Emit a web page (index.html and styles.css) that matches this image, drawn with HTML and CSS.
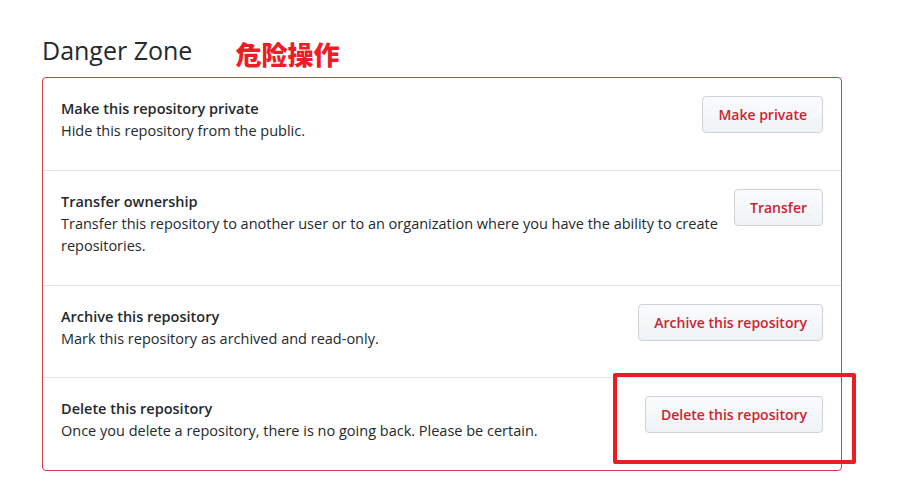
FILE: index.html
```html
<!DOCTYPE html>
<html lang="en">
<head>
<meta charset="utf-8">
<title>Danger Zone</title>
<link rel="stylesheet" href="styles.css">
</head>
<body>
<div class="page">
  <div class="heading">
    <h2 class="title">Danger Zone</h2>
    <span class="note">危险操作</span>
  </div>
  <div class="box">
    <div class="row">
      <div class="text">
        <div class="row-title">Make this repository private</div>
        <div class="row-desc">Hide this repository from the public.</div>
      </div>
      <button class="btn">Make private</button>
    </div>
    <div class="row">
      <div class="text">
        <div class="row-title">Transfer ownership</div>
        <div class="row-desc">Transfer this repository to another user or to an organization where you have the ability to create repositories.</div>
      </div>
      <button class="btn">Transfer</button>
    </div>
    <div class="row">
      <div class="text">
        <div class="row-title">Archive this repository</div>
        <div class="row-desc">Mark this repository as archived and read-only.</div>
      </div>
      <button class="btn">Archive this repository</button>
    </div>
    <div class="row">
      <div class="text">
        <div class="row-title">Delete this repository</div>
        <div class="row-desc">Once you delete a repository, there is no going back. Please be certain.</div>
      </div>
      <button class="btn">Delete this repository</button>
    </div>
    <div class="highlight"></div>
  </div>
</div>
</body>
</html>
```
FILE: styles.css
```css
html, body {
  margin: 0;
  padding: 0;
  background: #ffffff;
}
body {
  font-family: "Open Sans", "Noto Sans", sans-serif;
  color: #24292e;
}
.page {
  padding: 35px 0 0 42px;
  width: 800px;
}
.heading {
  display: flex;
  align-items: center;
  height: 30px;
  margin-bottom: 12px;
}
.title {
  margin: 0;
  font-size: 25px;
  line-height: 30px;
  font-weight: 400;
  color: #24292e;
}
.note {
  margin-left: 43px;
  font-family: "Noto Sans CJK SC", sans-serif;
  font-weight: 900;
  font-size: 26px;
  line-height: 30px;
  color: #ee1c25;
  margin-top: 8px;
}
.box {
  position: relative;
  border: 1px solid #d73a49;
  border-radius: 4px;
}
.row {
  display: flex;
  align-items: flex-start;
  gap: 6px;
  padding: 20px 18px 27px 18px;
  border-top: 1px solid #e1e4e8;
}
.row:first-child {
  border-top: none;
}
.text {
  flex: 1;
  font-size: 14.5px;
}
.row-title {
  font-weight: 600;
  line-height: 22px;
}
.row-desc {
  font-weight: 400;
  line-height: 22.5px;
}
.btn {
  flex: none;
  margin-top: -2px;
  height: 37px;
  padding: 0 15px;
  font-family: inherit;
  font-size: 14px;
  font-weight: 600;
  color: #cb2431;
  background: linear-gradient(#fafbfc, #eff3f6);
  border: 1px solid #cfd2d6;
  border-radius: 4px;
}
.highlight {
  position: absolute;
  left: 570px;
  top: 295px;
  width: 235px;
  height: 83px;
  border: 4px solid #ed1c24;
  border-radius: 2px;
}
```
